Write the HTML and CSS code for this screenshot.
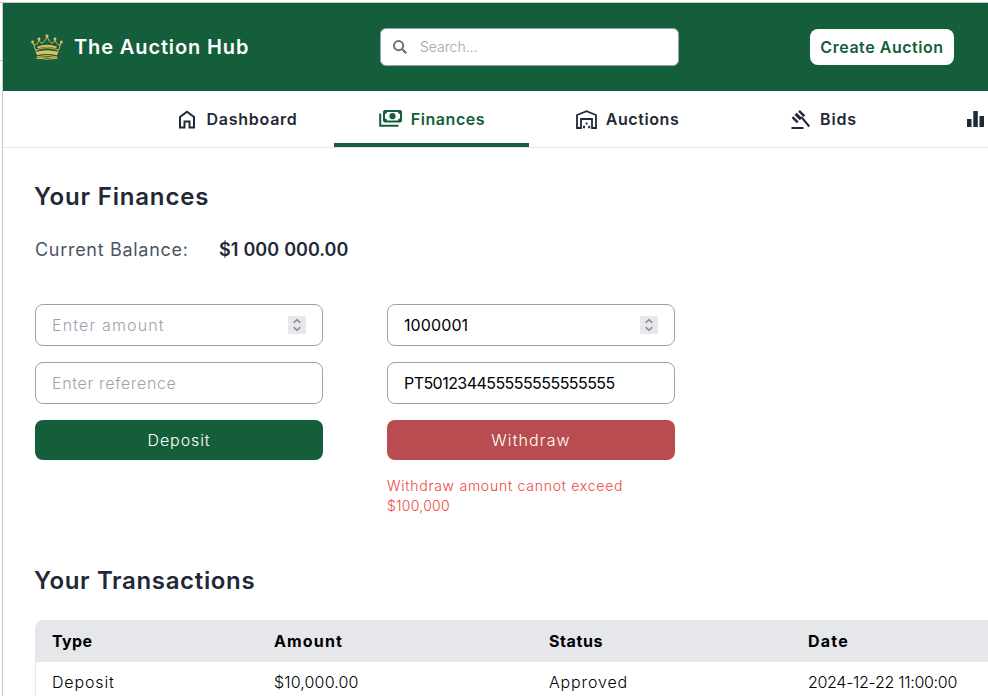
FILE: index.html
```html
<!DOCTYPE html>
<html lang="en">
<head>
<meta charset="utf-8">
<title>The Auction Hub</title>
<link rel="stylesheet" href="styles.css">
</head>
<body>
<div class="app">
  <header class="header">
    <div class="brand">
      <svg class="crown" viewBox="0 0 32 26" fill="none" stroke="#e3bd58">
        <g fill="#e3bd58" stroke="none"><circle cx="16" cy="1.9" r="1.6"/><circle cx="8" cy="5" r="1.4"/><circle cx="24" cy="5" r="1.4"/><circle cx="1.6" cy="8" r="1.4"/><circle cx="30.4" cy="8" r="1.4"/>
        <path d="M6 12.8Q16 8.5 26 12.8L25 14.3Q16 11 7 14.3ZM5.2 17.8Q16 14.6 26.8 17.8L26 21.3Q16 18.7 6 21.3Z"/></g>
        <path stroke-width="0.9" d="M2 9L6 20M30 9L26 20M2 9Q5 14 8 6Q11 13.5 16 3Q21 13.5 24 6Q27 14 30 9M5 16Q16 11.5 27 16M6 22.8Q16 19.9 26 22.8M5.5 24.2Q16 21.9 26.5 24.2Q16 26.2 5.5 24.2"/>
      </svg>
      <span class="brand-name">The Auction Hub</span>
    </div>
    <div class="search">
      <svg class="search-icon" viewBox="0 0 14 14" fill="none" stroke="#6b7280" stroke-width="2"><circle cx="5.6" cy="5.6" r="4.6"/><path d="M9 9L13.2 13.2" stroke-width="2.3"/></svg>
      <span class="search-text">Search...</span>
    </div>
    <button class="create">Create Auction</button>
  </header>
  <nav class="nav">
    <a class="tab tab-dashboard"><svg class="ico-home" viewBox="0 0 18 19" fill="none" stroke="currentColor" stroke-width="2"><path d="M2 17.5V7L9 1.8L16 7V17.5H11.5V11.5H6.5V17.5Z"/></svg><span>Dashboard</span></a>
    <a class="tab tab-finances active"><svg class="ico-cash" viewBox="0 0 23 18"><path fill="none" stroke="currentColor" stroke-width="2" d="M1.2 3.5V15.7H19.5"/><path fill="currentColor" fill-rule="evenodd" d="M6 0H21Q23 0 23 2V10.5Q23 12.5 21 12.5H6Q4 12.5 4 10.5V2Q4 0 6 0ZM8 2Q8 4 6 4V8.5Q8 8.5 8 10.5H19Q19 8.5 21 8.5V4Q19 4 19 2Z"/><circle cx="13.5" cy="6.2" r="3.1" fill="currentColor"/></svg><span>Finances</span></a>
    <a class="tab tab-auctions"><svg class="ico-house" viewBox="0 0 21 19" fill="none" stroke="currentColor" stroke-width="1.8"><path d="M1 18V5L10.5 1.2L20 5V18H16V9H5V18Z"/><path fill="currentColor" stroke="none" d="M7 15.8H9V18.2H7ZM9.6 12.6H11.6V14.6H9.6ZM12.2 15.8H14.2V18.2H12.2Z"/></svg><span>Auctions</span></a>
    <a class="tab tab-bids"><svg class="ico-gavel" viewBox="0 0 19 19" fill="currentColor"><path d="M0.5 17H12.5V19H0.5ZM0.6 8L2.3 6.3L7.6 11.6L5.9 13.3ZM3.5 5L5.7 2.8L11 8.1L8.8 10.3ZM7.2 1.7L8.9 0L14.2 5.3L12.5 7ZM9.6 7.8L11.1 6.3L19 15.8L17.5 17.3Z"/></svg><span>Bids</span></a>
    <a class="tab tab-last"><svg class="ico-stats" viewBox="0 0 17 16" fill="currentColor"><path d="M0 8H4.5V16H0ZM6.3 0H10.8V16H6.3ZM12.5 5H17V16H12.5Z"/></svg></a>
  </nav>
  <main class="main">
    <h1 class="title title-finances">Your Finances</h1>
    <div class="balance"><span class="balance-label">Current Balance:</span><span class="balance-value">$1 000 000.00</span></div>
    <div class="forms">
      <div class="form">
        <div class="field hint"><span class="f-amount">Enter amount</span><svg class="spin" viewBox="0 0 18 18" fill="none" stroke="#918f99" stroke-width="1.6"><path d="M5.7 6.8L9 3.7L12.3 6.8M5.7 11.2L9 14.3L12.3 11.2"/></svg></div>
        <div class="field hint"><span class="f-ref">Enter reference</span></div>
        <button class="btn btn-green">Deposit</button>
      </div>
      <div class="form">
        <div class="field"><span class="f-num">1000001</span><svg class="spin" viewBox="0 0 18 18" fill="none" stroke="#918f99" stroke-width="1.6"><path d="M5.7 6.8L9 3.7L12.3 6.8M5.7 11.2L9 14.3L12.3 11.2"/></svg></div>
        <div class="field"><span class="f-iban">PT501234455555555555555</span></div>
        <button class="btn btn-red">Withdraw</button>
        <p class="error">Withdraw amount cannot exceed <span class="error-amount">$100,000</span></p>
      </div>
    </div>
    <h2 class="title title-transactions">Your Transactions</h2>
    <div class="table">
      <div class="row head"><span class="h-type">Type</span><span class="h-amount">Amount</span><span class="h-status">Status</span><span class="h-date">Date</span></div>
      <div class="row"><span class="c-type">Deposit</span><span class="c-amount">$10,000.00</span><span class="c-status">Approved</span><span class="c-date">2024-12-22 11:00:00</span></div>
    </div>
  </main>
</div>
</body>
</html>
```
FILE: styles.css
```css
* { box-sizing: border-box; }
body { margin: 0; background: #fff; color: #000; font-family: Inter, "Liberation Sans", sans-serif; font-size: 16px; line-height: 24px; }
.app { width: 988px; height: 696px; overflow: hidden; padding: 3px 0 0 3px; background: linear-gradient(#c8c8c8, #c8c8c8) 2px 2px / 1px 100% no-repeat, linear-gradient(#c8c8c8, #c8c8c8) 0 2px / 100% 1px no-repeat, linear-gradient(#c8c8c8, #c8c8c8) 0 60px / 3px 1px no-repeat; }
.header { height: 88px; display: flex; align-items: center; background: #155e3b; }
.brand { width: 377px; padding-left: 28px; display: flex; align-items: center; gap: 11px; color: #fff; }
.crown { width: 32px; height: 26px; }
.brand-name { font-size: 20px; font-weight: 600; letter-spacing: 0.88px; }
.search { width: 299px; height: 38px; display: flex; align-items: center; gap: 13px; padding-left: 12px; border: 1px solid #9ca3af; border-radius: 6px; background: #fff; }
.search-icon { width: 14px; height: 14px; }
.search-text { font-size: 14px; font-weight: 300; color: #9ca3af; }
.create { width: 144px; height: 36px; margin-left: 131px; padding: 0; border: 0; border-radius: 8px; background: #fff; color: #155e3b; font: 600 16px/24px Inter, sans-serif; letter-spacing: 0.54px; }
.nav { height: 57px; display: flex; padding-left: 136px; border-bottom: 1px solid #e5e7eb; }
.tab { flex: 0 0 195px; display: flex; align-items: center; justify-content: center; gap: 10px; border-bottom: 4px solid transparent; padding-top: 4px; color: #1f2937; font-weight: 600; }
.tab.active { border-color: #155e3b; color: #155e3b; gap: 9px; }
.tab svg { flex: none; }
.tab-dashboard { letter-spacing: 0.75px; padding-left: 3px; }
.tab-finances { letter-spacing: 0.55px; padding-left: 1px; }
.tab-auctions { letter-spacing: 0.6px; padding-left: 2px; gap: 9px; }
.tab-bids { letter-spacing: 0.9px; padding-left: 5px; }
.tab-last { justify-content: flex-start; padding-left: 45px; margin-left: 3px; }
.ico-home { width: 18px; height: 19px; }
.ico-cash { width: 23px; height: 18px; }
.ico-house { width: 21px; height: 19px; }
.ico-gavel { width: 19px; height: 19px; }
.ico-stats { width: 17px; height: 16px; }
.main { padding: 33px 0 0 32px; }
.title { margin: 0 0 0 -1px; font-size: 24px; line-height: 32px; font-weight: 600; color: #1f2937; }
.title-finances { letter-spacing: 0.82px; }
.balance { display: flex; margin-top: 23px; font-size: 18px; line-height: 28px; }
.balance-label { width: 184px; font-weight: 400; letter-spacing: 0.7px; color: #4b5563; }
.balance-value { font-weight: 600; word-spacing: 0.6px; color: #1f2937; }
.forms { display: flex; gap: 64px; height: 212px; margin-top: 40px; }
.form { width: 288px; display: flex; flex-direction: column; gap: 16px; }
.field { height: 42px; display: flex; align-items: center; justify-content: space-between; padding: 0 16px; border: 1px solid #9ca3af; border-radius: 8px; font-weight: 400; }
.hint { color: #9ca3af; font-weight: 300; }
.f-amount { letter-spacing: 1.15px; }
.f-ref { letter-spacing: 0.66px; }
.f-num { letter-spacing: 0.1px; }
.f-iban { letter-spacing: -0.55px; }
.spin { width: 18px; height: 18px; background: #e8e7ec; }
.btn { height: 40px; padding: 0; border: 0; border-radius: 8px; color: #fff; font: 300 16px/24px Inter, sans-serif; }
.btn-green { background: #155e3b; letter-spacing: 0.9px; }
.btn-red { background: #b94c50; letter-spacing: 1.1px; }
.error { margin: 0; font-size: 14px; line-height: 20px; font-weight: 300; letter-spacing: 0.75px; color: #ef4444; }
.error-amount { letter-spacing: 0.25px; }
.title-transactions { margin-top: 49px; letter-spacing: 0.66px; }
.table { margin-top: 23px; width: 1100px; border-left: 1px solid #e5e7eb; border-radius: 8px 0 0 0; overflow: hidden; }
.row { display: grid; grid-template-columns: 222px 275px 259px 1fr; height: 40px; align-items: center; padding-left: 16px; font-weight: 300; }
.head { background: #e5e7eb; height: 42px; font-weight: 700; }
.h-type { letter-spacing: 0.4px; }
.h-amount { letter-spacing: 1.15px; }
.h-status { letter-spacing: 0.6px; }
.h-date { letter-spacing: 1.2px; }
.c-type, .c-status { letter-spacing: 0.85px; }
.c-amount { letter-spacing: 0.15px; }
.c-date { letter-spacing: -0.3px; }
```
